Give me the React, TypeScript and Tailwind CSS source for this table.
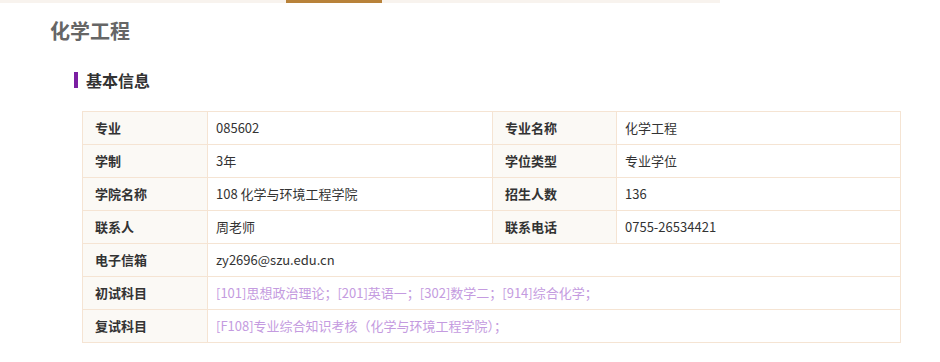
const rows: [string, string, string?, string?][] = [
  ['专业', '085602', '专业名称', '化学工程'],
  ['学制', '3年', '学位类型', '专业学位'],
  ['学院名称', '108 化学与环境工程学院', '招生人数', '136'],
  ['联系人', '周老师', '联系电话', '0755-26534421'],
  ['电子信箱', 'zy2696@szu.edu.cn'],
];

const exams: [string, string][] = [
  ['初试科目', '[101]思想政治理论；[201]英语一；[302]数学二；[914]综合化学；'],
  ['复试科目', '[F108]专业综合知识考核（化学与环境工程学院）；'],
];

const label = 'border border-[#f5e4d3] bg-[#fbf9f5] pl-3 text-left font-bold text-[#333]';
const value = 'border border-[#f5e4d3] pl-2 text-left text-[#333]';

export default function App() {
  return (
    <div
      className="min-h-[362px] w-[940px] bg-white"
      style={{ fontFamily: '"Noto Sans CJK SC", "Liberation Sans", sans-serif' }}
    >
      {/* tab strip */}
      <div className="flex h-[3px] w-[720px] bg-[#f8f3ee]">
        <div className="ml-[286px] h-[3px] w-[96px] bg-[#b8823a]" />
      </div>

      <div className="pl-[50px] pt-[13px]">
        <h1 className="text-[20px] font-bold leading-[30px] text-[#666]">化学工程</h1>

        <div className="mt-[22px] ml-[24px] flex items-center gap-2">
          <span className="h-4 w-1 bg-[#7b1fa2]" />
          <h2 className="text-base leading-6 font-bold text-[#333]">基本信息</h2>
        </div>

        <table className="mt-[19px] ml-[32px] w-[819px] table-fixed border-collapse text-[13px]">
          <colgroup>
            <col className="w-[125px]" />
            <col className="w-[285px]" />
            <col className="w-[124px]" />
            <col />
          </colgroup>
          <tbody>
            {rows.map(([a, b, c, d]) => (
              <tr key={a} className="h-[33px]">
                <th className={label}>{a}</th>
                {c ? (
                  <>
                    <td className={value}>{b}</td>
                    <th className={label}>{c}</th>
                    <td className={value}>{d}</td>
                  </>
                ) : (
                  <td className={value} colSpan={3}>{b}</td>
                )}
              </tr>
            ))}
            {exams.map(([a, b]) => (
              <tr key={a} className="h-[33px]">
                <th className={label}>{a}</th>
                <td className={value + ' !text-[#c49be0]'} colSpan={3}>{b}</td>
              </tr>
            ))}
          </tbody>
        </table>
      </div>
    </div>
  );
}
